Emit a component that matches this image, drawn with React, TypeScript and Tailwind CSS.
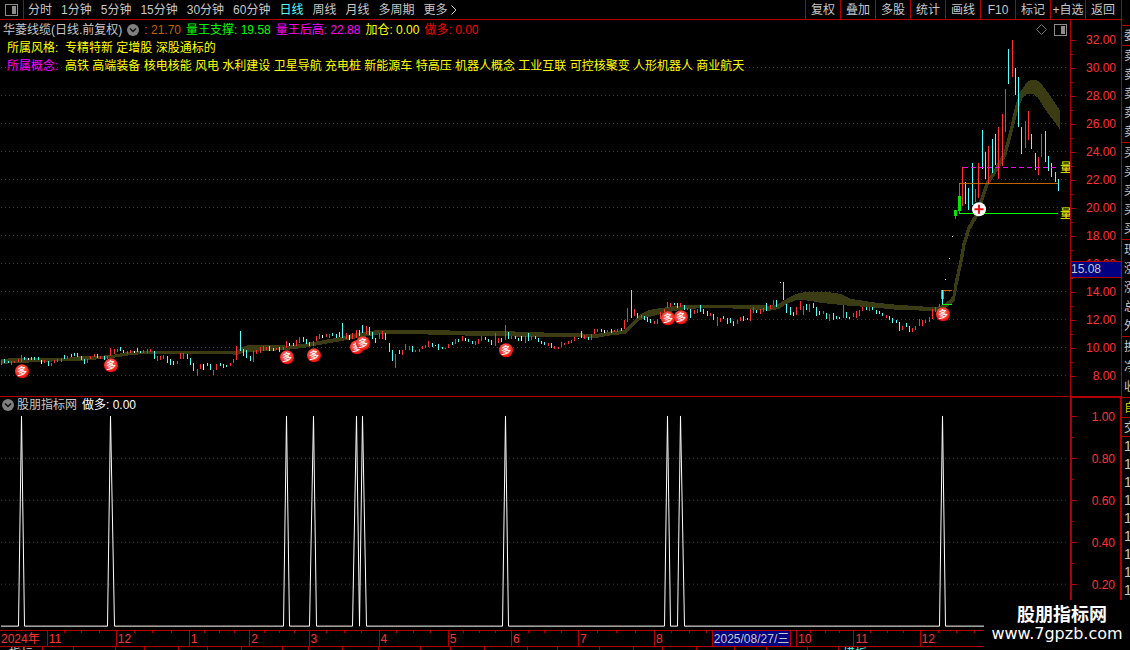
import { Fragment } from "react"
import clsx from "clsx"

const periods = ["分时", "1分钟", "5分钟", "15分钟", "30分钟", "60分钟", "日线", "周线", "月线", "多周期"]
const tools = ["复权", "叠加", "多股", "统计", "画线", "F10", "标记", "+自选", "返回"]

const concepts =
  "高铁 高端装备 核电核能 风电 水利建设 卫星导航 充电桩 新能源车 特高压 机器人概念 工业互联 可控核聚变 人形机器人 商业航天"

const prices = ["32.00", "30.00", "28.00", "26.00", "24.00", "22.00", "20.00", "18.00", "16.00", "14.00", "12.00", "10.00", "8.00"]
const levels = ["1.00", "0.80", "0.60", "0.40", "0.20"]

// Month label and the room it takes on the time axis
const months = [
  { label: "2024年", span: 47 },
  { label: "11", span: 69 },
  { label: "12", span: 73 },
  { label: "1", span: 60 },
  { label: "2", span: 59 },
  { label: "3", span: 70 },
  { label: "4", span: 69 },
  { label: "5", span: 63 },
  { label: "6", span: 67 },
  { label: "7", span: 76 },
  { label: "8", span: 70 },
  { label: "", span: 72 },
  { label: "10", span: 57 },
  { label: "11", span: 66 },
  { label: "12", span: 72 },
  { label: "", span: 131 },
]

// Daily ranges: r = up, c = down, w = flat, then x, high and low in thirds of a pixel from the origin
const ranges = [
  {
    x: 0,
    y: 310,
    bars: `r4,150,165 c13,146,160 c25,152,160 r34,154,164 r43,152,160 r55,148,156 r64,135,156 c73,141,150 w85,144,150
      c94,142,150 c103,141,149 c115,142,150 w124,150,162 r133,149,158 c145,152,168 r154,158,167 r163,150,159 r172,147,157
      r184,144,156 c193,135,146 r202,138,146 c214,132,141 c223,128,138 c232,128,140 c244,138,149 c253,147,162 r262,147,158
      r271,138,148 r283,132,142 c292,132,143 r301,137,147 c313,138,150 r322,137,147 r331,114,138 r343,117,131 r352,117,126
      c361,111,123 c370,120,130 r382,123,132 r391,120,130 w403,122,129 c412,114,126 c421,122,130 r430,120,130 r442,117,128
      r451,117,127 c463,123,146 r472,138,152 r481,138,150 r490,134,146 c502,138,158 c511,146,164 c520,153,166 r532,152,162
      r541,129,147 r550,129,147 c562,131,147 c571,143,165 c580,159,183 r592,176,198 r601,162,177 w610,162,180 c622,158,168
      c631,161,180 r640,179,196 r649,162,180 c661,159,168 c670,161,174 c679,165,171 r691,158,167 r700,146,158 r709,108,150
      c721,63,123 c730,117,137 c739,120,144 c751,138,153 r760,123,156 r769,120,132 r781,111,129 r790,108,122 r799,110,121
      c808,108,122`,
  },
  {
    x: 270,
    y: 310,
    bars: `c10,114,123 r19,114,120 c28,111,126 r40,111,120 r49,93,113 w58,99,107 c70,99,107 r79,90,107 r88,81,99 c100,81,96
      c109,87,101 c118,96,107 r130,93,108 r139,78,92 r148,72,86 w157,75,84 r169,71,81 r178,72,83 c187,69,78 c199,72,84
      c208,66,82 c217,39,84 r229,69,86 w238,75,90 r247,69,86 r259,60,83 c268,60,78 c277,45,69 r289,48,72 c298,51,75
      c307,66,86 c316,84,99 r328,69,87 r337,63,86 c346,69,90 c358,99,126 c367,120,153 r376,132,174 c388,120,131
      r397,120,135 r406,102,120 r418,108,120 c427,108,126 r436,120,126 r448,117,126 r457,108,117 r466,105,114 r475,93,111
      c487,99,111 c496,105,108 c505,102,120 c517,111,117 r526,113,117 r535,102,114 c547,96,105 r556,87,102 c565,87,96
      r577,78,93 w586,84,93 c595,87,96 c607,93,102 r616,93,105 r625,87,102 r634,78,93 c646,81,90 c655,87,96 c664,90,105
      r676,69,108 r685,84,99 c694,84,96 r706,45,90 c715,66,87 r724,78,87 c736,78,87 c745,84,93 w754,78,93 r766,78,99
      c775,69,93 r784,78,90 c796,78,87 c805,84,96`,
  },
  {
    x: 540,
    y: 280,
    bars: `c4,183,192 c13,186,195 r25,189,198 c34,189,204 r43,198,206 r55,201,207 r64,186,201 r73,189,195 r85,183,192
      r94,180,189 r103,171,183 c115,174,177 c124,153,174 r133,165,177 c145,171,180 r154,162,180 r163,147,162 r172,147,156
      c184,147,156 w193,150,159 r202,150,156 c214,147,158 r223,150,156 r232,147,156 c244,144,153 r253,120,148 r262,84,126
      c274,30,114 r283,87,108 c292,99,114 r304,105,114 c313,108,120 c322,111,126 c331,117,129 r343,123,132 r352,117,132
      r361,96,117 r373,87,96 r382,66,84 r391,69,81 c403,69,75 c412,69,84 r421,69,81 c433,75,90 r442,84,90 c451,87,114
      r463,90,102 r472,87,99 c481,75,96 c490,87,102 c502,93,108 r511,99,108 c520,102,120 r532,111,138 r541,114,126
      c550,108,117 c562,114,132 c571,114,129 c580,123,138 r592,120,132 r601,111,123 c610,108,123 c622,114,120 r631,87,123
      r640,81,99 c649,90,99 r661,87,102 r670,84,96 c679,69,93 r691,75,87 r700,60,75 c709,60,81 w721,6,9 c730,6,60
      c739,72,99 c751,81,105 c760,96,108 r769,81,105 r781,63,90 r790,78,105 c799,72,90 r808,72,96 c820,69,84 c829,81,108
      c838,93,105`,
  },
  {
    x: 770,
    y: 270,
    bars: `r160,123,132 c169,128,147 r178,132,153 c190,129,150 c199,138,147 c208,141,147 r220,105,144 c229,126,144
      c238,141,147 r250,129,141 r259,123,144 r268,120,138 r277,111,123 c289,111,120 r298,111,123 c307,111,120 c319,120,132
      c328,123,132 c337,129,138 r349,135,144 c358,138,150 c367,144,159 c379,150,159 c388,156,183 r397,168,180 c409,159,171
      c418,168,186 r427,174,186 r436,168,180 r448,147,168 r457,150,168 r466,150,159 r478,141,156 r487,117,147 r496,111,126
      r508,102,111 w526,27,30`,
  },
  {
    x: 920,
    y: 30,
    bars: `w88,684,687 w97,618,621 r106,558,567 r118,460,550 r127,411,528 c136,456,522 c145,474,540 c157,399,525
      r166,477,516 r175,399,504 c187,300,417 c196,366,447 r205,348,460 c217,327,429 c226,312,405 r235,291,447 r247,252,408
      r256,177,306 c265,57,162 r277,30,141 c286,114,195 c295,141,291 c304,291,372 r316,273,354 r325,243,330 c334,312,357
      c346,369,420 r355,381,435 r364,312,381 c376,303,396 c385,378,423 c394,399,441 c406,426,456 c415,447,483`,
  },
]

function barPath(kind: string) {
  return ranges
    .flatMap(({ x, y, bars }) =>
      bars
        .split(/\s+/)
        .filter((bar) => bar[0] === kind)
        .map((bar) => {
          const [bx, high, low] = bar.slice(1).split(",").map(Number)
          return `M${x + Math.floor(bx / 3) + 0.5} ${y + Math.round(high / 3)}V${y + Math.round(low / 3)}`
        }),
    )
    .join("")
}

const band =
  "1,359 21,358 67,358 83,356 100,356 113,355 133,351 237,351 245,346 253,345 280,345 287,346 303,344 320,341 337,338 353,334 370,331 382,330 433,330 457,331 480,331 530,332 550,333 598,334 607,332 625,330 632,323 640,315 650,310 670,307 687,305 757,305 770,306 779,304 787,299 797,294 807,292 825,292 840,294 850,299 877,303 897,305 927,307 937,307 943,305 950,300 953,296 955,283 960,260 963,243 968,227 975,215 986,183 996,167 1004,153 1010,130 1016,105 1020,93 1027,83 1031,80 1036,80 1040,83 1047,92 1059,110 " +
  "1059,127 1047,111 1038,97 1033,93 1027,93 1022,98 1018,108 1012,132 1006,155 998,169 988,185 977,217 970,229 965,245 962,262 957,285 954,301 943,309 937,310 927,310 897,309 877,307 850,305 840,304 820,302 810,300 797,299 787,303 779,308 770,310 757,309 720,307 687,308 670,311 650,316 640,319 632,326 625,333 607,335 598,337 550,336 530,336 480,335 433,334 417,333 382,333 370,335 353,338 337,341 320,344 303,347 287,349 270,350 253,351 245,351 237,354 225,353 147,353 133,354 113,357 83,360 67,360 21,362 1,363"

const signals = [
  [22, 371], [111, 365], [287, 357], [314, 355], [357, 347], [363, 343], [506, 350], [668, 318], [681, 317], [943, 314],
]

// left foot, peak, right foot
const spikes = [
  [18, 21, 24], [107, 110, 114], [283, 286, 289], [309, 313, 316], [352, 356, 359], [359, 362, 366], [502, 505, 508],
  [664, 667, 670], [677, 680, 684], [939, 942, 945],
]

const quoteSections = [
  { rows: ["委"], size: "h-5" },
  { rows: ["卖", "卖", "卖", "卖", "卖"], size: "h-[97px]" },
  { rows: ["买", "买", "买", "买", "买"], size: "h-[97px]" },
  { rows: ["现", "涨", "涨", "总", "外"], size: "h-[97px]" },
  { rows: ["换", "净", "收"], size: "h-[61px]" },
]

// Widths of the indicator tabs along the bottom edge
const tabs = [31, 42, 29, 34, 29, 34, 41, 26, 34, 36, 42, 30, 34, 43, 30, 42, 34, 29, 34, 38, 32, 41, 31]

function PanelIcon() {
  return (
    <svg width="13" height="12" viewBox="0 0 13 12" fill="none" shapeRendering="crispEdges">
      <rect x="0.5" y="0.5" width="12" height="11" rx="1" stroke="#8c8c8c" />
      <rect x="7" y="2" width="4" height="8" fill="#8c8c8c" />
    </svg>
  )
}

function ChevronIcon() {
  return (
    <svg width="12" height="12" viewBox="0 0 12 12" fill="none">
      <circle cx="6" cy="6" r="6" fill="#808080" />
      <path d="M3 4.5L6 7.5L9 4.5" stroke="#101010" strokeWidth="1.5" />
    </svg>
  )
}

function Toolbar() {
  return (
    <header className="flex h-5 shrink-0 justify-between border-b border-[#b00000] text-[#c8c8c8]">
      <nav className="flex items-stretch">
        <button aria-label="侧栏" className="flex w-6 items-center border-r border-[#b00000] pl-[5px]">
          <PanelIcon />
        </button>
        <div className="flex items-center gap-[9px] pl-1">
          {periods.map((period) => (
            <button key={period} className={clsx(period === "日线" && "text-[#54ffff]")}>
              {period}
            </button>
          ))}
          <button className="flex items-center gap-[3px]">
            更多
            <svg width="6" height="10" viewBox="0 0 6 10" fill="none" stroke="currentColor">
              <path d="M0.5 0.5L5 5L0.5 9.5" />
            </svg>
          </button>
        </div>
      </nav>
      <nav className="flex pr-px">
        {tools.map((tool) => (
          <button key={tool} className="w-[35px] border-l border-[#b00000] text-center whitespace-nowrap">
            {tool}
          </button>
        ))}
      </nav>
    </header>
  )
}

function Axis({ labels }: { labels: string[] }) {
  return (
    <>
      {labels.map((label, i) => (
        <Fragment key={label}>
          <div className="flex min-h-0 flex-1 items-center justify-between pr-[5px]">
            <span className="h-px w-[5px] bg-[#b00000]" />
            <span className="leading-none">{label}</span>
          </div>
          {(i < labels.length - 1 || label === "0.20") && (
            <div className="flex min-h-0 flex-1 items-center">
              <span className="h-px w-[2px] bg-[#b00000]" />
            </div>
          )}
        </Fragment>
      ))}
    </>
  )
}

function PriceChart() {
  return (
    <svg
      className="absolute inset-0 h-full w-full"
      viewBox="0 20 1070 376"
      preserveAspectRatio="none"
      shapeRendering="crispEdges"
      fill="none"
    >
      <defs>
        <radialGradient id="ball" cx="0.45" cy="0.4" r="0.6">
          <stop offset="0" stopColor="#ff8070" />
          <stop offset="0.6" stopColor="#fa4038" />
          <stop offset="1" stopColor="#e80000" />
        </radialGradient>
      </defs>
      {[67, 95, 123, 151, 179, 207, 235, 263, 291, 319, 347, 375].map((y) => (
        <path key={y} d={`M1 ${y + 0.5}H1067`} stroke="#961414" strokeDasharray="1 3" />
      ))}
      <polygon points={band} fill="#3c3c14" stroke="#3c3c14" />
      <path d={barPath("r")} stroke="#ff3232" />
      <path d={barPath("c")} stroke="#54ffff" />
      <path d={barPath("w")} stroke="#fff" />
      <path d="M963 167.5H1056" stroke="#ff00ff" strokeDasharray="5 3" />
      <path d="M959 183.5H1058M943 290.5H952" stroke="#c06400" />
      <path d="M959 213.5H1058M942 304.5H952" stroke="#00ff00" />
      <path d="M958 196h3v15h-3zM954 210h3v6h-3zM941 290h3v9h-3z" fill="#00e600" />
      <path d="M942.5 290V304" stroke="#54ffff" />
      {signals.map(([x, y]) => (
        <g key={x} shapeRendering="auto">
          <circle cx={x} cy={y} r="7" fill="url(#ball)" />
          <text x={x} y={y + 4} fontSize="10" fontWeight="500" textAnchor="middle" fill="#fff">
            多
          </text>
        </g>
      ))}
      <g shapeRendering="auto">
        <circle cx="979" cy="209" r="7" fill="#fff" />
        <path d="M974.5 209H983.5M979 204.5V213.5" stroke="#f01010" strokeWidth="2" />
      </g>
      <g fontSize="12" fill="#ffff00">
        <text x="1060" y="172">量</text>
        <text x="1060" y="218">量</text>
      </g>
    </svg>
  )
}

function SignalChart() {
  const line = spikes.map(([left, peak, right]) => `L${left}.5 626.5L${peak}.5 416L${right}.5 626.5`).join("")

  return (
    <svg
      className="absolute inset-0 h-full w-full"
      viewBox="0 397 1070 233"
      preserveAspectRatio="none"
      shapeRendering="crispEdges"
      fill="none"
    >
      {[458, 500, 542, 584].map((y) => (
        <path key={y} d={`M1 ${y + 0.5}H1067`} stroke="#961414" strokeDasharray="1 3" />
      ))}
      <path d={`M1 626.5${line}H1070`} stroke="#fff" />
    </svg>
  )
}

function Legend() {
  return (
    <div className="relative flex flex-col pl-[3px]">
      <div className="flex h-[19px] items-center justify-between pr-[3px]">
        <div className="flex items-center gap-[5px]">
          <h1 className="text-[#c8c8c8]">华菱线缆(日线.前复权)</h1>
          <button aria-label="指标菜单">
            <ChevronIcon />
          </button>
          <span className="text-[#c06400]">: 21.70</span>
          <span className="text-[#00ff00]">量王支撑: 19.58</span>
          <span className="text-[#ff00ff]">量王后高: 22.88</span>
          <span className="text-[#ffff00]">加仓: 0.00</span>
          <span className="text-[#ff0000]">做多: 0.00</span>
        </div>
        <div className="flex items-center gap-[7px]">
          <svg width="11" height="11" viewBox="0 0 11 11" fill="none" stroke="#707070">
            <path d="M5.5 0.5L10.5 5.5L5.5 10.5L0.5 5.5Z" />
          </svg>
          <PanelIcon />
        </div>
      </div>
      <dl className="grid grid-cols-[58px_1fr] items-center pl-1 leading-[18px] text-[#ffff00]">
        <dt>所属风格:</dt>
        <dd>专精特新 定增股 深股通标的</dd>
        <dt className="text-[#ff00ff]">所属概念:</dt>
        <dd>{concepts}</dd>
      </dl>
    </div>
  )
}

function TimeAxis() {
  return (
    <div className="relative flex h-[17px] shrink-0 border-y border-[#b00000] text-[#ff3232]">
      {months.map(({ label, span }, i) => (
        <div
          key={i}
          className={clsx("relative min-w-0 basis-0 pl-px leading-4", i > 0 && "border-l border-[#b00000]")}
          style={{ flexGrow: span }}
        >
          {label}
          {i > 0 && i < months.length - 1 && (
            <div className="absolute inset-x-0 top-0 flex justify-evenly">
              <span className="h-[2px] w-px bg-[#b00000]" />
              <span className="h-[2px] w-px bg-[#b00000]" />
              <span className="h-[2px] w-px bg-[#b00000]" />
            </div>
          )}
        </div>
      ))}
      <time className="absolute inset-y-0 left-[63.5%] border-x border-[#b00000] bg-[#000080] px-px leading-4 whitespace-nowrap text-[#c8c8c8]">
        2025/08/27/三
      </time>
    </div>
  )
}

function QuoteStrip() {
  return (
    <aside className="flex w-[9px] shrink-0 flex-col overflow-hidden border-l border-[#b00000] pt-[25px] whitespace-nowrap text-[#c8c8c8]">
      {quoteSections.map(({ rows, size }, i) => (
        <div key={i} className={clsx("flex shrink-0 flex-col border-t border-[#b00000] pl-[2px]", size)}>
          {rows.map((row, j) => (
            <span key={j} className="flex min-h-0 flex-1 items-center">
              {row}
            </span>
          ))}
        </div>
      ))}
      <div className="h-5 shrink-0 border-t border-[#b00000] pl-[2px] leading-5 text-[#c8c800]">自</div>
      <div className="h-5 shrink-0 border-y border-[#b00000] pl-[2px] leading-5">交</div>
      {[1, 2, 3, 4, 5, 6, 7, 8, 9].map((row) => (
        <span key={row} className="h-[18px] shrink-0 pl-[2px] text-sm leading-[18px]">
          1
        </span>
      ))}
    </aside>
  )
}

export default function App() {
  return (
    <div className="relative flex h-screen overflow-hidden bg-black font-['Liberation_Sans','Noto_Sans_CJK_SC',sans-serif] text-xs">
      <main className="flex min-w-0 flex-1 flex-col">
        <Toolbar />
        <section className="flex min-h-0 flex-[377] border-b border-[#b00000]">
          <div className="relative min-w-0 flex-1">
            <PriceChart />
            <Legend />
          </div>
          <div className="relative flex w-[51px] flex-col border-l border-[#b00000] py-[13px] text-[#ff3232]">
            <Axis labels={prices} />
            <div className="absolute inset-x-0 top-[64%] h-[17px] border-y border-[#b00000] bg-[#000080] leading-[15px] text-[#c8c8c8]">
              15.08
            </div>
          </div>
        </section>
        <section className="flex min-h-0 flex-[233]">
          <div className="relative min-w-0 flex-1">
            <SignalChart />
            <div className="relative flex h-4 items-center gap-[5px] pl-[2px] text-white">
              <button aria-label="副图菜单" className="-mr-[2px]">
                <ChevronIcon />
              </button>
              <h2 className="text-[#c8c8c8]">股朋指标网</h2>
              <span>做多: 0.00</span>
            </div>
          </div>
          <div className="flex w-[51px] flex-col border-t border-r border-l-2 border-[#b00000] pt-2 pb-[14px] text-[#ff3232]">
            <Axis labels={levels} />
          </div>
        </section>
        <TimeAxis />
        <div className="flex h-[3px] shrink-0 divide-x divide-[#b00000] overflow-hidden leading-[14px] text-[#c8c8c8]">
          <button className="w-[43px] shrink-0">指标</button>
          {tabs.map((width, i) => (
            <span key={i} className="shrink-0" style={{ width }} />
          ))}
          <button className="w-8 shrink-0 text-[#54ffff]">模板</button>
        </div>
      </main>
      <QuoteStrip />
      <div className="absolute right-0 bottom-0 flex h-[50px] w-[146px] flex-col items-center bg-black pt-1 text-white">
        <strong className="pl-[10px] text-lg leading-[22px]">股朋指标网</strong>
        <a href="#" className="font-['DejaVu_Sans',sans-serif] text-base leading-4">
          www.7gpzb.com
        </a>
      </div>
    </div>
  )
}
